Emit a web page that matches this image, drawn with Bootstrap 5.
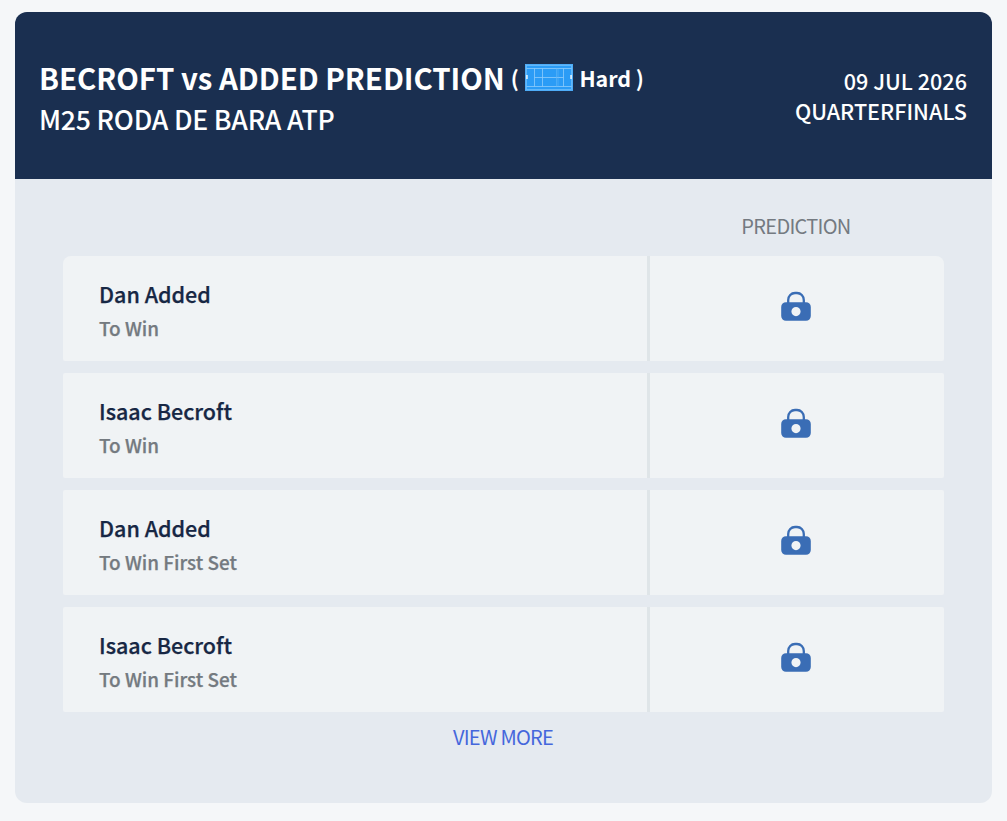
<!DOCTYPE html>
<html lang="en">
  <head>
    <meta charset="UTF-8" />
    <meta name="viewport" content="width=device-width, initial-scale=1.0" />
    <title>Becroft vs Added Prediction</title>
    <link
      rel="stylesheet"
      href="https://cdn.jsdelivr.net/npm/bootstrap@5.3.2/dist/css/bootstrap.min.css"
    />
    <script src="https://cdn.jsdelivr.net/npm/bootstrap@5.3.2/dist/js/bootstrap.bundle.min.js"></script>
    <style>
      body {
        background: #f5f7f9;
        font-family: "Noto Sans CJK JP", "Noto Sans", sans-serif;
        padding: 12px 15px 0;
      }
      .match-card {
        background: #e5eaf0;
        border-radius: 12px;
        width: 977px;
        height: 791px;
      }
      .match-head {
        background: #1a2f50;
        height: 167px;
        padding: 0 25px 0 24px;
      }
      .match-title {
        font-size: 29.4px;
        font-weight: 700;
        letter-spacing: -0.04px;
        line-height: 41px;
      }
      .match-info {
        padding-top: 5px;
      }
      .surface {
        font-size: 21.4px;
        margin-left: 6px;
      }
      .court {
        width: 48px;
        height: 27px;
        margin: 0 6.5px 0 6px;
      }
      .tour {
        font-size: 26.6px;
        font-weight: 500;
        letter-spacing: -0.2px;
        line-height: 41px;
      }
      .match-date {
        font-size: 21.6px;
        line-height: 30px;
      }
      .match-body {
        padding: 31px 48px 0;
      }
      .tip-grid {
        display: grid;
        grid-template-columns: 584px 294px;
        column-gap: 3px;
      }
      .col-title {
        color: #747a81;
        font-size: 20px;
        letter-spacing: -0.7px;
        line-height: 32px;
        height: 46px;
        padding-right: 2px;
      }
      .tips {
        row-gap: 12px;
      }
      .tip {
        background: #f0f3f5;
        height: 105px;
        padding: 4px 36px 0;
        border-radius: 2px 0 0 2px;
        box-shadow: 3px 0 0 #dfe5e8;
      }
      .tip-lock {
        background: #f0f3f5;
        border-radius: 0 2px 2px 0;
        padding: 0 2px 6px 0;
      }
      .tip-first {
        border-top-left-radius: 8px;
      }
      .lock-first {
        border-top-right-radius: 8px;
      }
      .tip-name {
        color: #172744;
        font-size: 21.5px;
        font-weight: 500;
        line-height: 34px;
        -webkit-text-stroke: 0.25px;
      }
      .tip-market {
        color: #747a80;
        font-size: 18.9px;
        font-weight: 500;
        line-height: 34px;
        -webkit-text-stroke: 0.25px;
      }
      .view-more {
        color: #4567dc;
        font-size: 20px;
        letter-spacing: -0.75px;
        line-height: 32px;
        margin-top: 9px;
        padding-right: 1px;
      }
    </style>
  </head>
  <body>
    <svg class="d-none">
      <symbol id="lock" viewBox="0 0 30 30">
        <path d="M7.2 12V9a6.8 7 0 0 1 6.8-7h2a6.8 7 0 0 1 6.8 7v3" fill="none" stroke="#3a6db5" stroke-width="2.3" />
        <path fill="#3a6db5" fill-rule="evenodd" d="M5 11.2h20a4.8 4.8 0 0 1 4.8 4.8v9a4.8 4.8 0 0 1-4.8 4.8H5A4.8 4.8 0 0 1 .2 25v-9A4.8 4.8 0 0 1 5 11.2zM15 16a4.6 4.6 0 1 0 0 9.2a4.6 4.6 0 1 0 0-9.2z" />
      </symbol>
    </svg>

    <div class="match-card overflow-hidden">
      <div class="match-head d-flex justify-content-between align-items-center text-white">
        <div class="match-info">
          <h1 class="match-title d-flex align-items-center mb-0">
            <span>BECROFT vs ADDED PREDICTION</span>
            <span class="surface d-flex align-items-center">
              <span>(</span>
              <svg class="court" viewBox="0 0 48 27">
                <rect width="48" height="27" fill="#2b9cf6" />
                <g fill="none" stroke="#8fcbfb" stroke-width="0.8">
                  <rect x="0.5" y="0.5" width="47" height="26" stroke="#57b0f7" />
                  <rect x="1.5" y="1.5" width="45" height="24" stroke="#6fbdf9" />
                  <path d="M1.5 4.5h45M1.5 22.5h45M9.5 4.5v18M17.5 4.5v18M38.5 4.5v18M9.5 13.5h29" />
                  <path d="M31.5 4.5v18M33 4.5v18" stroke="#62b7f8" stroke-width="0.6" />
                </g>
                <path d="M1 11h1.8v4H1zM45.2 11H47v4h-1.8z" fill="#d5ecfd" />
              </svg>
              <span>Hard )</span>
            </span>
          </h1>
          <div class="tour">M25 RODA DE BARA ATP</div>
        </div>
        <div class="match-date text-end fw-medium">
          <div>09 JUL 2026</div>
          <div>QUARTERFINALS</div>
        </div>
      </div>

      <div class="match-body">
        <div class="tip-grid">
          <div></div>
          <div class="col-title text-center">PREDICTION</div>
        </div>
        <div class="tip-grid tips">
          <div class="tip tip-first d-flex flex-column justify-content-center">
            <div class="tip-name">Dan Added</div>
            <div class="tip-market">To Win</div>
          </div>
          <div class="tip-lock lock-first d-flex align-items-center justify-content-center">
            <svg width="30" height="30"><use href="#lock" /></svg>
          </div>
          <div class="tip d-flex flex-column justify-content-center">
            <div class="tip-name">Isaac Becroft</div>
            <div class="tip-market">To Win</div>
          </div>
          <div class="tip-lock d-flex align-items-center justify-content-center">
            <svg width="30" height="30"><use href="#lock" /></svg>
          </div>
          <div class="tip d-flex flex-column justify-content-center">
            <div class="tip-name">Dan Added</div>
            <div class="tip-market">To Win First Set</div>
          </div>
          <div class="tip-lock d-flex align-items-center justify-content-center">
            <svg width="30" height="30"><use href="#lock" /></svg>
          </div>
          <div class="tip d-flex flex-column justify-content-center">
            <div class="tip-name">Isaac Becroft</div>
            <div class="tip-market">To Win First Set</div>
          </div>
          <div class="tip-lock d-flex align-items-center justify-content-center">
            <svg width="30" height="30"><use href="#lock" /></svg>
          </div>
        </div>
        <div class="text-center">
          <a href="#" class="view-more d-inline-block text-decoration-none">VIEW MORE</a>
        </div>
      </div>
    </div>
  </body>
</html>
